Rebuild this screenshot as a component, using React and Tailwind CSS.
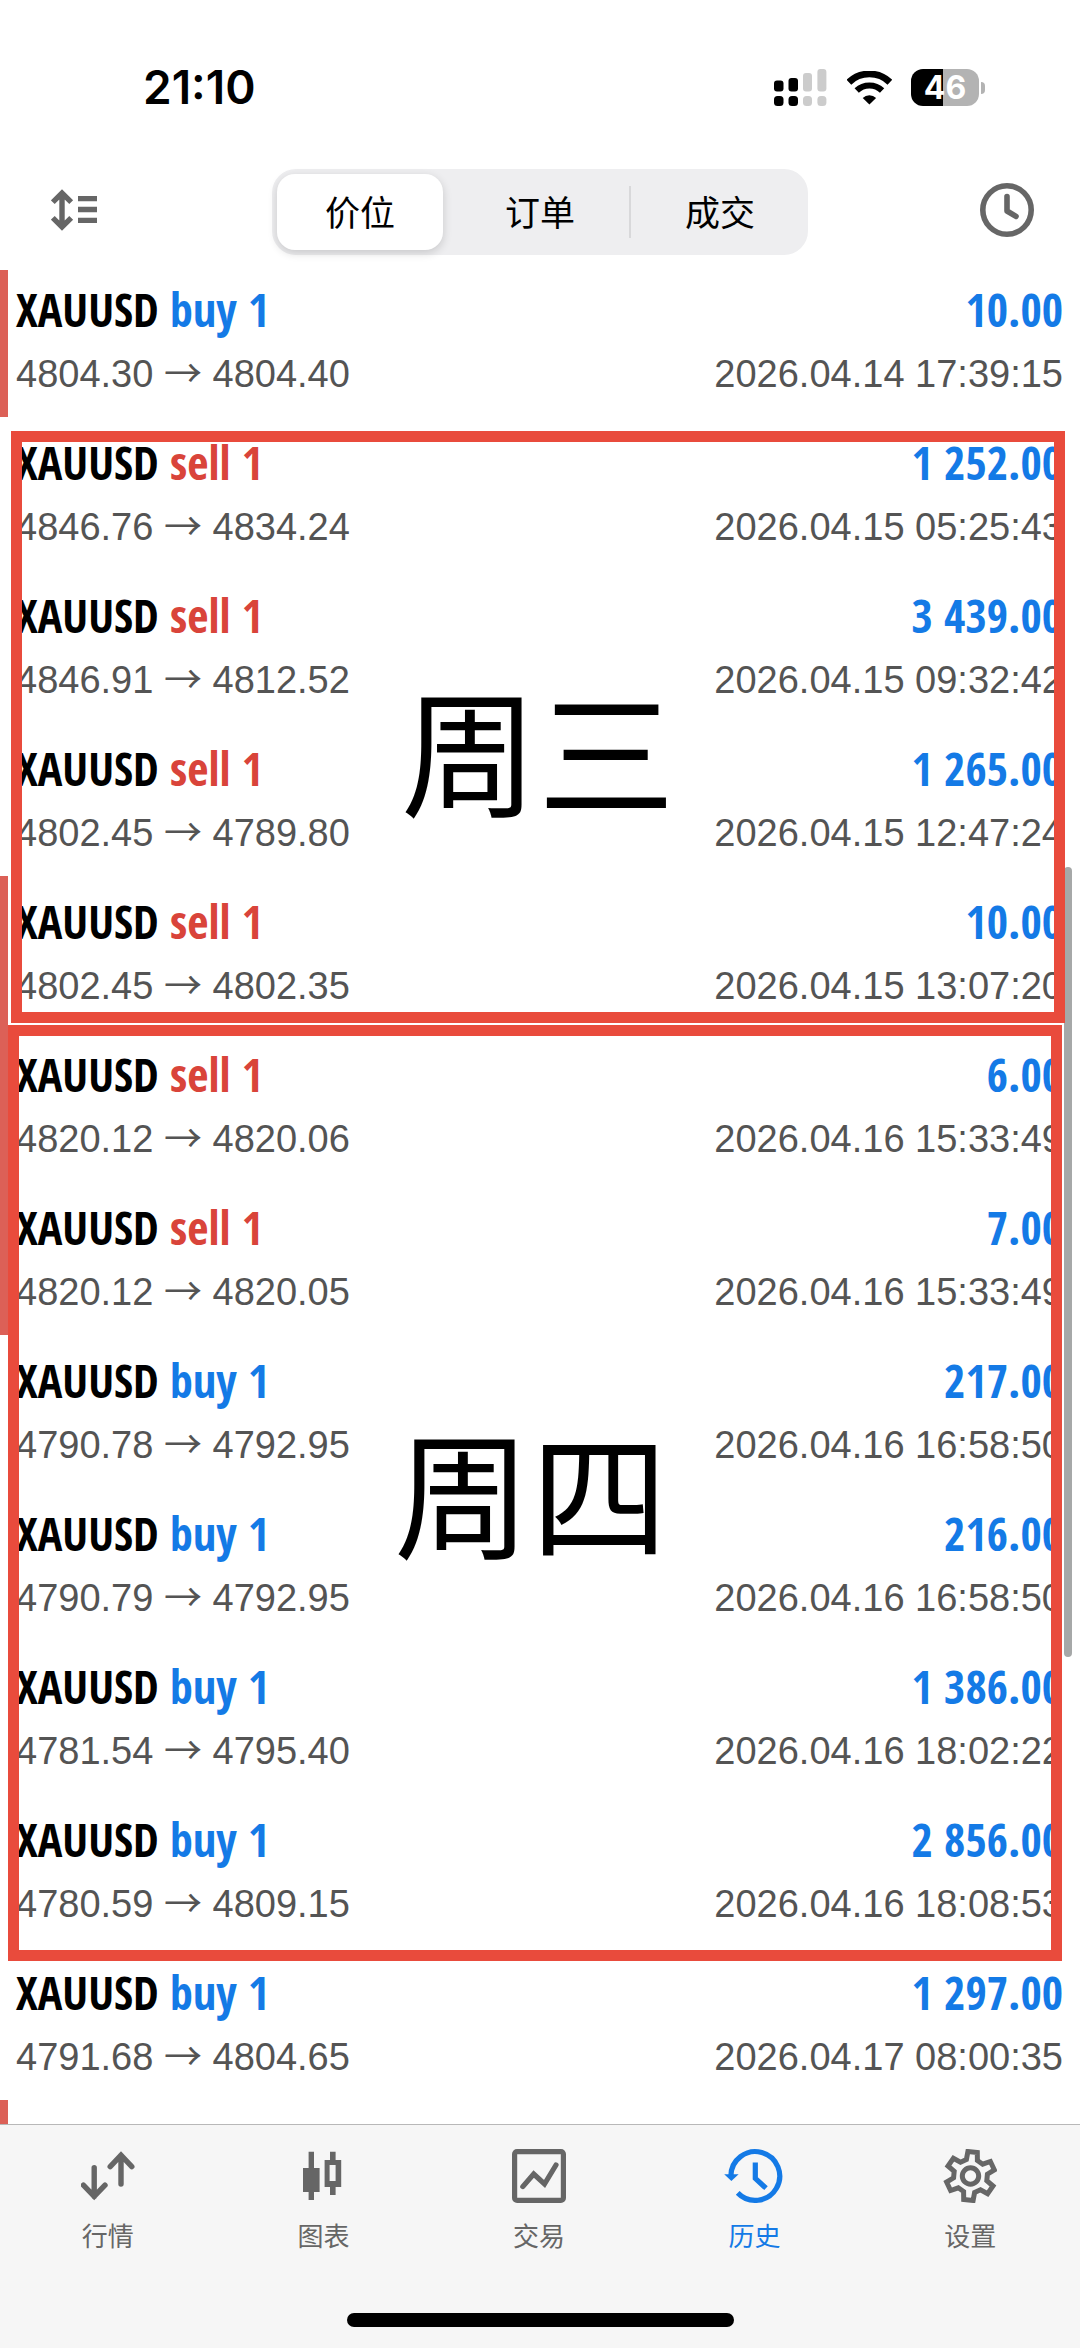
import React, { useState } from 'react';

const deals = {
  before: [
    { side: 'buy', open: '4804.30', close: '4804.40', profit: '10.00', time: '2026.04.14 17:39:15', flagged: true },
  ],
  wednesday: [
    { side: 'sell', open: '4846.76', close: '4834.24', profit: '1 252.00', time: '2026.04.15 05:25:43' },
    { side: 'sell', open: '4846.91', close: '4812.52', profit: '3 439.00', time: '2026.04.15 09:32:42' },
    { side: 'sell', open: '4802.45', close: '4789.80', profit: '1 265.00', time: '2026.04.15 12:47:24' },
    { side: 'sell', open: '4802.45', close: '4802.35', profit: '10.00', time: '2026.04.15 13:07:20', flagged: true },
  ],
  thursday: [
    { side: 'sell', open: '4820.12', close: '4820.06', profit: '6.00', time: '2026.04.16 15:33:49', flagged: true },
    { side: 'sell', open: '4820.12', close: '4820.05', profit: '7.00', time: '2026.04.16 15:33:49', flagged: true },
    { side: 'buy', open: '4790.78', close: '4792.95', profit: '217.00', time: '2026.04.16 16:58:50' },
    { side: 'buy', open: '4790.79', close: '4792.95', profit: '216.00', time: '2026.04.16 16:58:50' },
    { side: 'buy', open: '4781.54', close: '4795.40', profit: '1 386.00', time: '2026.04.16 18:02:22' },
    { side: 'buy', open: '4780.59', close: '4809.15', profit: '2 856.00', time: '2026.04.16 18:08:53' },
  ],
  after: [
    { side: 'buy', open: '4791.68', close: '4804.65', profit: '1 297.00', time: '2026.04.17 08:00:35' },
  ],
};

const SignalIcon = () => (
  <svg width="53" height="37" viewBox="0 0 53 37">
    <rect x="0" y="11.5" width="9.5" height="11" rx="3" />
    <rect x="14.5" y="9" width="9.5" height="13.5" rx="3" />
    <rect x="29" y="4" width="9" height="18.5" rx="3" fill="#cccccc" />
    <rect x="43.4" y="0" width="9" height="22.5" rx="3" fill="#cccccc" />
    <rect x="0" y="27" width="9.5" height="10" rx="3.5" />
    <rect x="14.5" y="27" width="9.5" height="10" rx="3.5" />
    <rect x="29" y="27" width="9" height="10" rx="3.5" fill="#cccccc" />
    <rect x="43.4" y="27" width="9" height="10" rx="3.5" fill="#cccccc" />
  </svg>
);

const WifiIcon = () => (
  <svg width="45" height="34" viewBox="0 0 45 34">
    <path d="M1.9 11.2A29.6 29.6 0 0 1 42.9 11.2" fill="none" stroke="#000" strokeWidth="6.8" />
    <path d="M9.7 19.6A18.4 18.4 0 0 1 35.1 19.6" fill="none" stroke="#000" strokeWidth="6.2" />
    <path d="M22.4 33.6L15.7 27A9.6 9.6 0 0 1 29.1 27Z" />
  </svg>
);

const SortIcon = () => (
  <svg width="46" height="42" viewBox="0 0 46 42" fill="none" stroke="#666666" strokeWidth="5.4">
    <path d="M11 4V38M1.8 13.2L11 4L20.2 13.2M1.8 28.8L11 38L20.2 28.8" />
    <path d="M27 9.6H46M27 20.5H46M27 31.4H46" />
  </svg>
);

const ClockIcon = () => (
  <svg width="54" height="54" viewBox="0 0 54 54" fill="none" stroke="#666666" strokeWidth="5.6">
    <circle cx="27" cy="27" r="24.2" />
    <path d="M27 13.5V28L36 33.4" strokeLinecap="round" strokeLinejoin="round" />
  </svg>
);

const QuotesIcon = () => (
  <svg className="size-[54px]" viewBox="0 0 54 54" fill="none" stroke="currentColor" strokeWidth="5.4" strokeLinecap="round">
    <path d="M13.2 18.6V47.4M2.4 36.2L13.2 47.4L24 36.2" />
    <path d="M40 35V6.2M29.2 17.6L40 6.2L50.8 17.6" />
  </svg>
);

const ChartIcon = () => (
  <svg className="size-[54px]" viewBox="0 0 54 54" fill="currentColor">
    <path d="M7 19H12.6V2.7H18V19H23.6V43H18V51H12.6V43H7Z" />
    <path fillRule="evenodd" d="M28.6 11H34V2.7H39.6V11H45.2V38H39.6V46H34V38H28.6ZM33.6 16V32H39.6V16Z" />
  </svg>
);

const TradeIcon = () => (
  <svg className="size-[54px]" viewBox="0 0 54 54" fill="none" stroke="currentColor" strokeWidth="5.2" strokeLinecap="round">
    <rect x="2.6" y="2.6" width="48.8" height="48.8" rx="2.5" />
    <path d="M10.8 37.6L21.7 25L32.5 35L44 16" />
  </svg>
);

const HistoryIcon = () => (
  <svg className="size-[54px] overflow-visible" viewBox="0 0 54 54" fill="none" stroke="currentColor" strokeWidth="5.2">
    <path d="M2.9 27A24.4 24.4 0 1 1 9.7 43.9" />
    <path d="M27.3 13.6V29.4L38 39.2" />
    <path d="M-3.8 25.2H10.6L3.4 32Z" fill="currentColor" stroke="none" />
  </svg>
);

// six teeth, turned a little clockwise
const gearPoints = [5, 65, 125, 185, 245, 305]
  .flatMap((angle) => [[17, -19], [24.6, -11], [24.6, 11], [17, 19]].map(([r, offset]) => {
    const a = ((angle + offset - 90) * Math.PI) / 180;
    return `${(27.5 + r * Math.cos(a)).toFixed(1)},${(27 + r * Math.sin(a)).toFixed(1)}`;
  }))
  .join(' ');

const SettingsIcon = () => (
  <svg className="size-[54px]" viewBox="0 0 54 54" fill="none" stroke="currentColor" strokeWidth="5">
    <polygon points={gearPoints} />
    <circle cx="27.5" cy="27" r="8.2" />
  </svg>
);

const tabs = [
  { name: '行情', icon: <QuotesIcon /> },
  { name: '图表', icon: <ChartIcon /> },
  { name: '交易', icon: <TradeIcon /> },
  { name: '历史', icon: <HistoryIcon /> },
  { name: '设置', icon: <SettingsIcon /> },
];

const DealRow = ({ deal }) => (
  <li className={`h-[153px] shrink-0 border-l-8 pl-[8px] pr-[17px] pt-[19px] ${deal.flagged ? 'border-[#dc6057]' : 'border-transparent'}`}>
    <div className="flex justify-between font-['Open_Sans_Condensed','Noto_Sans_Condensed','Roboto_Condensed','Liberation_Sans_Narrow',sans-serif] text-[46px] font-bold leading-[52px]">
      <span>
        XAUUSD <span className={deal.side === 'buy' ? 'text-[#147ae6]' : 'text-[#d9443a]'}>{deal.side} 1</span>
      </span>
      <span className="text-[#147ae6]">{deal.profit}</span>
    </div>
    <div className="mt-[17px] flex justify-between text-[38px] leading-[44px] text-[#545454]">
      <span>{deal.open} <span className="font-['Noto_Sans_CJK_SC'] leading-none">→</span> {deal.close}</span>
      <span>{deal.time}</span>
    </div>
  </li>
);

const DealList = ({ items }) => (
  <ul>
    {items.map((deal, i) => <DealRow key={i} deal={deal} />)}
  </ul>
);

export default function App() {
  const [view, setView] = useState('价位');
  const [activeTab, setActiveTab] = useState('历史');

  return (
    <div className="flex h-screen flex-col overflow-hidden bg-white font-['Liberation_Sans','Noto_Sans_CJK_SC',sans-serif] text-black">
      <div className="flex h-[169px] shrink-0 items-start justify-between pl-[143px] pr-[95px] pt-[69px]">
        <span className="font-['Inter'] text-[46px] font-semibold leading-[37px]">21:10</span>
        <div className="flex items-center">
          <SignalIcon />
          <div className="ml-5"><WifiIcon /></div>
          <div className="ml-[19px] flex h-[37px] w-[68px] items-center justify-center rounded-xl bg-[linear-gradient(90deg,#000_47%,#b3b3b3_47%)] font-['Inter'] text-[32px] font-bold leading-[37px] text-white">46</div>
          <div className="ml-[2px] h-3 w-1 rounded-r-full bg-[#b3b3b3]" />
        </div>
      </div>

      <header className="flex h-[101px] shrink-0 items-start justify-between pl-[51px] pr-[46px]">
        <button aria-label="排序" className="mt-5 w-[49px]"><SortIcon /></button>
        <div className="grid h-[86px] w-[536px] grid-cols-3 gap-[14px] rounded-3xl bg-[#eeeef0] p-[5px]">
          {['价位', '订单', '成交'].map((name, i) => (
            <button
              key={name}
              aria-pressed={view === name}
              onClick={() => setView(name)}
              className={`relative rounded-[18px] pt-1 text-[35px] leading-[44px] ${view === name ? 'bg-white shadow-[0_3px_10px_rgba(0,0,0,0.16)]' : ''}`}
            >
              {name}
              {i === 1 && <span className="absolute -right-2 top-3 h-[52px] w-[2px] bg-[#d8d8da]" />}
            </button>
          ))}
        </div>
        <button aria-label="时间范围" className="mt-[14px]"><ClockIcon /></button>
      </header>

      <main className="relative min-h-0 flex-1 overflow-hidden">
        <div className="-mt-[6px]">
          <DealList items={deals.before} />
          <section className="relative">
            <DealList items={deals.wednesday} />
            <div className="absolute bottom-[6px] left-[11px] right-[15px] top-[14px] z-10 flex items-center justify-center border-[11px] border-[#e94b3c] pt-16 text-[137px] leading-none">
              周三
            </div>
          </section>
          <section className="relative">
            <DealList items={deals.thursday} />
            <div className="absolute -bottom-[14px] -top-1 left-2 right-[18px] z-10 flex items-center justify-center border-[11px] border-[#e94b3c] pr-2 pt-4 text-[137px] leading-none">
              周四
            </div>
          </section>
          <DealList items={deals.after} />
          <div className="h-[153px] w-2 bg-[#dc6057]" />
        </div>
        <div className="absolute right-2 top-[597px] h-[790px] w-2 rounded-full bg-[#a6a8a8]" />
      </main>

      <nav className="flex h-[224px] shrink-0 flex-col items-center justify-between border-t border-[#b8b8b8] bg-[#f6f6f6] pb-[21px]">
        <div className="grid w-full grid-cols-5 pr-[2px] pt-6">
          {tabs.map((tab) => (
            <button
              key={tab.name}
              onClick={() => setActiveTab(tab.name)}
              className={`flex flex-col items-center gap-4 text-[26px] leading-[36px] ${activeTab === tab.name ? 'text-[#147ae6]' : 'text-[#666666]'}`}
            >
              {tab.icon}
              {tab.name}
            </button>
          ))}
        </div>
        <div className="h-[14px] w-[387px] rounded-full bg-black" />
      </nav>
    </div>
  );
}
